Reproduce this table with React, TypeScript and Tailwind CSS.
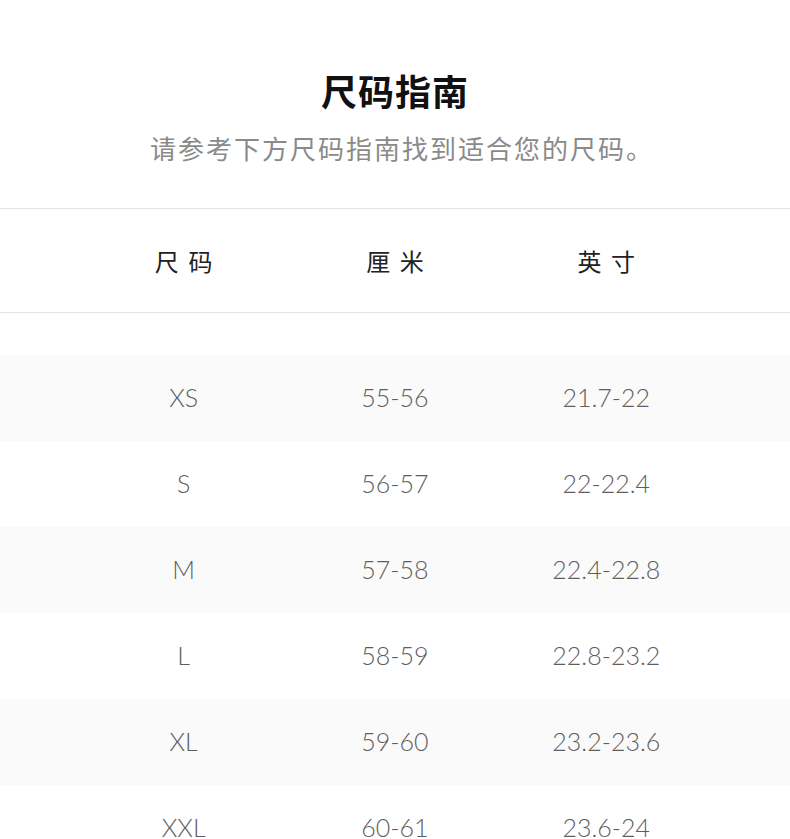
const rows = [
  { size: 'XS', cm: '55-56', inch: '21.7-22' },
  { size: 'S', cm: '56-57', inch: '22-22.4' },
  { size: 'M', cm: '57-58', inch: '22.4-22.8' },
  { size: 'L', cm: '58-59', inch: '22.8-23.2' },
  { size: 'XL', cm: '59-60', inch: '23.2-23.6' },
  { size: 'XXL', cm: '60-61', inch: '23.6-24' },
];

export default function App() {
  return (
    <div className="w-[790px] h-[839px] overflow-hidden bg-white font-['Noto_Sans_CJK_SC',sans-serif]">
      {/* Heading */}
      <div className="pt-[70px] pb-[42px] border-b border-[#e2e2e2] text-center">
        <h1 className="text-[36px] leading-[40px] font-bold text-[#111] tracking-[1px]">尺码指南</h1>
        <p className="mt-[20px] pl-[14px] text-[26px] leading-[36px] text-[#8a8a8a] tracking-[2px]">
          请参考下方尺码指南找到适合您的尺码。
        </p>
      </div>

      {/* Table header */}
      <div className="h-[104px] grid grid-cols-3 items-center px-[78px] border-b border-[#e2e2e2] text-center text-[24px] text-[#222] tracking-[0.4em]">
        <span className="pl-[0.4em] pt-[1px]">尺码</span>
        <span className="pl-[0.4em] pt-[1px]">厘米</span>
        <span className="pl-[0.4em] pt-[1px]">英寸</span>
      </div>

      {/* Rows */}
      <div className="pt-[42px] font-['Lato',sans-serif] font-light text-[25px] text-[#5e5e5e]">
        {rows.map((r, i) => (
          <div
            key={r.size}
            className={`h-[86px] grid grid-cols-3 items-center px-[78px] text-center ${
              i % 2 === 0 ? 'bg-[#fafafa]' : 'bg-white'
            }`}
          >
            <span>{r.size}</span>
            <span>{r.cm}</span>
            <span>{r.inch}</span>
          </div>
        ))}
      </div>
    </div>
  );
}
